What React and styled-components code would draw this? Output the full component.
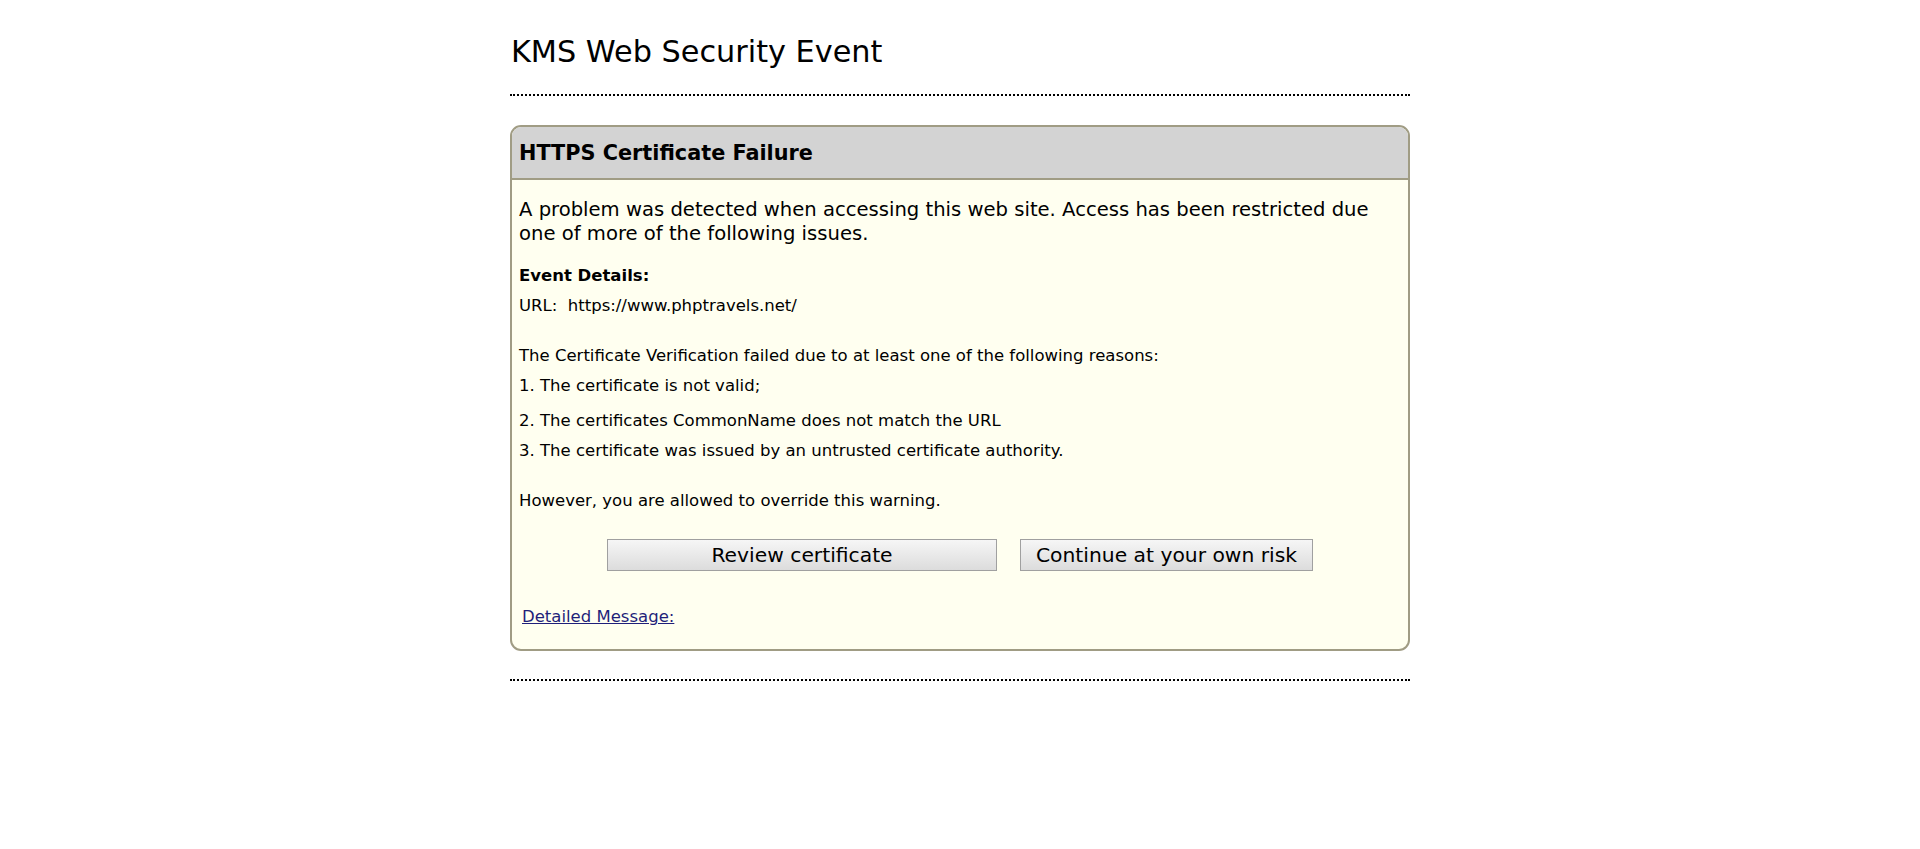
import React from 'react'
import styled, { createGlobalStyle } from 'styled-components'

const GlobalStyle = createGlobalStyle`
    body {
        margin: 0;
        background: #ffffff;
        font-family: Verdana, "DejaVu Sans", sans-serif;
        color: #000;
    }
`

const Page = styled.div`
    width: 900px;
    margin: 0 auto;
    padding-top: 34px;
`

const Title = styled.h1`
    margin: 0;
    font-size: 30.3px;
    line-height: 36px;
    font-weight: normal;
    padding-left: 1px;
`

const Rule = styled.div`
    border-top: 2px dotted #000;
    margin-top: ${p => p.top}px;
`

const Box = styled.div`
    margin-top: 29px;
    border: 2px solid #a09c84;
    border-radius: 11px;
    background: #fffff0;
    overflow: hidden;
`

const BoxHeader = styled.div`
    background: #d3d3d3;
    border-bottom: 2px solid #a09c84;
    padding: 14px 7px 13px;
    font-size: 20.8px;
    line-height: 24px;
    font-weight: bold;
`

const BoxBody = styled.div`
    padding: 18px 7px 22px;
`

const Intro = styled.p`
    margin: 0;
    font-size: 19.6px;
    line-height: 24px;
`

const Line = styled.div`
    font-size: 16.5px;
    line-height: 20px;
    margin-top: ${p => p.top || 0}px;
    font-weight: ${p => (p.bold ? 'bold' : 'normal')};
    white-space: pre;
`

const ButtonRow = styled.div`
    display: flex;
    justify-content: center;
    gap: 23px;
    margin-top: 28px;
`

const Button = styled.button`
    width: ${p => p.w}px;
    height: 32px;
    border: 1px solid #a0a0a0;
    border-radius: 0;
    background: linear-gradient(#f6f6f6, #dcdcdc);
    font-family: Verdana, "DejaVu Sans", sans-serif;
    font-size: 20.3px;
    color: #000;
    padding: 0;
    cursor: pointer;
`

const DetailLink = styled.a`
    display: block;
    margin-top: 36px;
    margin-left: 3px;
    font-size: 16.5px;
    line-height: 20px;
    color: #1f1f7a;
    text-decoration: underline;
`

const App = () => (
    <>
        <GlobalStyle />
        <Page>
            <Title>KMS Web Security Event</Title>
            <Rule top={24} />
            <Box>
                <BoxHeader>HTTPS Certificate Failure</BoxHeader>
                <BoxBody>
                    <Intro>
                        A problem was detected when accessing this web site. Access has been restricted due
                        one of more of the following issues.
                    </Intro>
                    <Line bold top={20}>Event Details:</Line>
                    <Line top={10}>URL:  https://www.phptravels.net/</Line>
                    <Line top={30}>The Certificate Verification failed due to at least one of the following reasons:</Line>
                    <Line top={10}>1. The certificate is not valid;</Line>
                    <Line top={15}>2. The certificates CommonName does not match the URL</Line>
                    <Line top={10}>3. The certificate was issued by an untrusted certificate authority.</Line>
                    <Line top={30}>However, you are allowed to override this warning.</Line>
                    <ButtonRow>
                        <Button w={390}>Review certificate</Button>
                        <Button w={293}>Continue at your own risk</Button>
                    </ButtonRow>
                    <DetailLink href="#">Detailed Message:</DetailLink>
                </BoxBody>
            </Box>
            <Rule top={28} />
        </Page>
    </>
)

export default App
